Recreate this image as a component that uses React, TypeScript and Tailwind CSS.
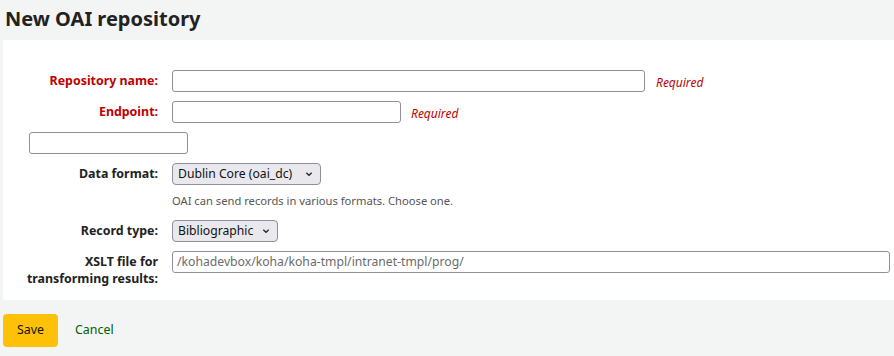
import React from "react";

const font = { fontFamily: '"Noto Sans", "Open Sans", Arial, sans-serif' };

function Chevron() {
  return (
    <svg width="10" height="10" viewBox="0 0 10 10">
      <path d="M2.3 3.7 L5 6.3 L7.7 3.7" fill="none" stroke="#222" strokeWidth="1.2" />
    </svg>
  );
}

function Row({ label, required, children }: { label: React.ReactNode; required?: boolean; children: React.ReactNode }) {
  return (
    <div className="flex items-start">
      <div
        className={`w-[155px] mr-[14px] text-right text-[12.4px] font-bold leading-[17px] pt-[2px] ${required ? "text-[#c00000]" : "text-[#222]"}`}
      >
        {label}
      </div>
      <div className="flex-1 min-w-0">{children}</div>
    </div>
  );
}

export default function App() {
  return (
    <div className="w-[894px] h-[356px] bg-[#f3f4f4] overflow-hidden" style={font}>
      <h1 className="text-[20px] font-bold text-[#222] leading-[24px] pl-[5px] pt-[7px] h-[40px]">New OAI repository</h1>
      <div className="ml-[3px] bg-white h-[260px] pt-[30px] flex flex-col gap-[9px]">
        <Row label="Repository name:" required>
          <div className="flex items-center">
            <input className="w-[473px] h-[22px] border border-[#8f8f9d] rounded-[3px] bg-white" />
            <span className="ml-[11px] mt-[3px] text-[12px] italic text-[#c00000]">Required</span>
          </div>
        </Row>
        <Row label="Endpoint:" required>
          <div className="flex items-center">
            <input className="w-[229px] h-[22px] border border-[#8f8f9d] rounded-[3px] bg-white" />
            <span className="ml-[10px] mt-[3px] text-[12px] italic text-[#c00000]">Required</span>
          </div>
        </Row>
        <div className="pl-[26px]">
          <input className="w-[159px] h-[22px] border border-[#8f8f9d] rounded-[3px] bg-white block" />
        </div>
        <Row label="Data format:">
          <div className="w-[149px] h-[22px] border border-[#8f8f9d] rounded-[4px] bg-[#e9e9ed] flex items-center justify-between pl-[5px] pr-[6px] text-[12.2px] text-[#111]">
            <span>Dublin Core (oai_dc)</span>
            <Chevron />
          </div>
          <div className="text-[11.2px] text-[#555] mt-[9px] leading-[14px]">OAI can send records in various formats. Choose one.</div>
        </Row>
        <div className="mt-[3px]">
          <Row label="Record type:">
            <div className="w-[106px] h-[22px] border border-[#8f8f9d] rounded-[4px] bg-[#e9e9ed] flex items-center justify-between pl-[5px] pr-[6px] text-[12.2px] text-[#111]">
              <span>Bibliographic</span>
              <Chevron />
            </div>
          </Row>
        </div>
        <Row
          label={
            <>
              XSLT file for
              <br />
              transforming results:
            </>
          }
        >
          <div className="w-[718px] h-[22px] border border-[#8f8f9d] rounded-[3px] bg-white flex items-center pl-[4px] text-[12.2px] text-[#6b6b6b]">
            /kohadevbox/koha/koha-tmpl/intranet-tmpl/prog/
          </div>
        </Row>
      </div>
      <div className="flex items-center pl-[3px] pt-[14px]">
        <button className="w-[55px] h-[33px] bg-[#ffc107] rounded-[4px] text-[12.4px] text-[#111]">Save</button>
        <span className="ml-[17px] text-[12.4px] text-[#006100]">Cancel</span>
      </div>
    </div>
  );
}
